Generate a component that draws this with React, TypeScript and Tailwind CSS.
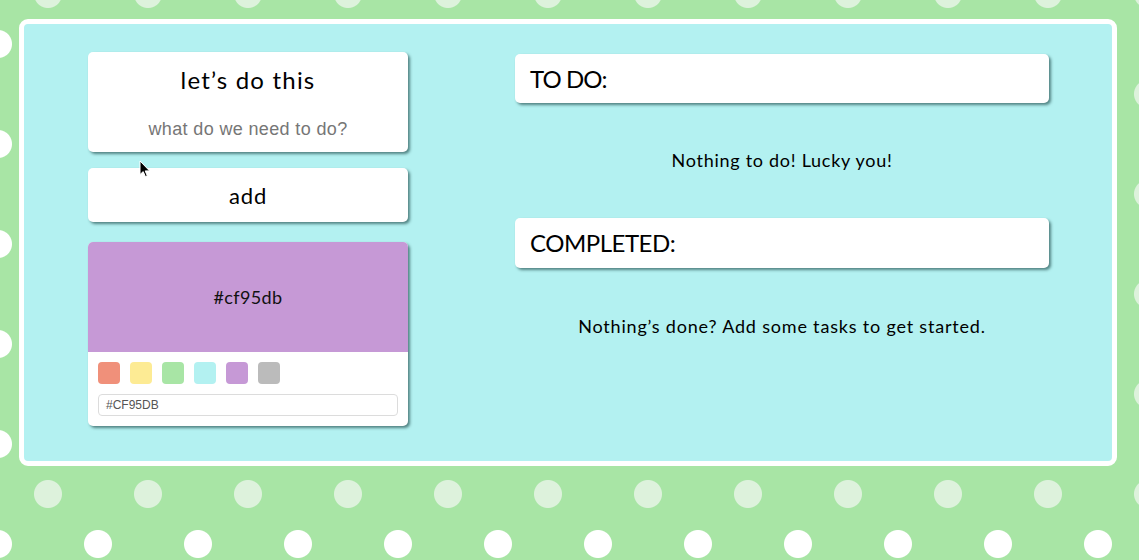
const swatches = ["#f0907a", "#fdeb94", "#a8e5a5", "#b3f1f1", "#c699d6", "#bbbbbb"];

const round = { fontFamily: "Lato, 'Noto Sans', sans-serif" };
const system = { fontFamily: "'Liberation Sans', Arial, sans-serif" };

function Card({ className = "", children }: { className?: string; children: React.ReactNode }) {
	return (
		<div className={`bg-white rounded-[5px] shadow-[2px_2px_3px_rgba(0,40,40,0.55)] ${className}`}>
			{children}
		</div>
	);
}

function Cursor() {
	return (
		<svg className="absolute left-[139px] top-[160px]" width="12" height="18" viewBox="0 0 12 18">
			<path d="M1 1 L1 14.5 L4.2 11.6 L6.4 16.6 L8.3 15.8 L6.2 10.9 L10.6 10.9 Z" fill="#000" stroke="#fff" strokeWidth="1" />
		</svg>
	);
}

export default function App() {
	return (
		<div className="relative h-[560px] w-full overflow-hidden bg-[#a8e5a5] bg-[image:radial-gradient(circle_at_25px_25px,#ffffff_13.5px,transparent_14.5px),radial-gradient(circle_at_75px_75px,#ddf2dc_13.5px,transparent_14.5px)] bg-[length:100px_100px] bg-[position:-27px_19px] pt-[19px] pl-[19px]">
			<div className="w-[1098px] h-[447px] rounded-[9px] border-[5px] border-white bg-[#b3f1f1] flex pl-[64px] pt-[28px]" style={round}>
				<div className="w-[320px] flex flex-col">
					<Card className="h-[100px] flex flex-col items-center">
						<div className="mt-[12px] text-[24px] leading-[32px] tracking-[0.05em] text-black">let’s do this</div>
						<div className="mt-[22px] text-[18px] leading-[22px] tracking-[0.02em] text-[#767676]" style={system}>what do we need to do?</div>
					</Card>
					<Card className="mt-[16px] h-[54px] flex items-center justify-center text-[22px] tracking-[0.04em] text-black">add</Card>
					<Card className="mt-[20px] h-[184px] overflow-hidden">
						<div className="h-[110px] bg-[#c699d6] flex items-center justify-center text-[18px] tracking-[0.02em] text-[#111]">#cf95db</div>
						<div className="px-[10px] pt-[10px]">
							<div className="flex gap-[10px]">
								{swatches.map((c) => (
									<div key={c} className="w-[22px] h-[22px] rounded-[4px]" style={{ backgroundColor: c }} />
								))}
							</div>
							<div className="mt-[10px] h-[22px] rounded-[4px] border border-[#dcdcdc] flex items-center pl-[7px] text-[12px] text-[#555]" style={system}>
								#CF95DB
							</div>
						</div>
					</Card>
				</div>
				<div className="ml-[107px] w-[534px] flex flex-col pt-[2px]">
					<Card className="h-[49px] flex items-center pl-[15px] text-[24px] tracking-[-0.04em] text-black">TO DO:</Card>
					<div className="h-[115px] flex items-center justify-center text-[18px] tracking-[0.04em] text-black">Nothing to do! Lucky you!</div>
					<Card className="h-[50px] flex items-center pl-[15px] text-[24px] tracking-[-0.02em] text-black">COMPLETED:</Card>
					<div className="h-[116px] flex items-center justify-center text-[18px] tracking-[0.045em] text-black">Nothing’s done? Add some tasks to get started.</div>
				</div>
			</div>
			<Cursor />
		</div>
	);
}
